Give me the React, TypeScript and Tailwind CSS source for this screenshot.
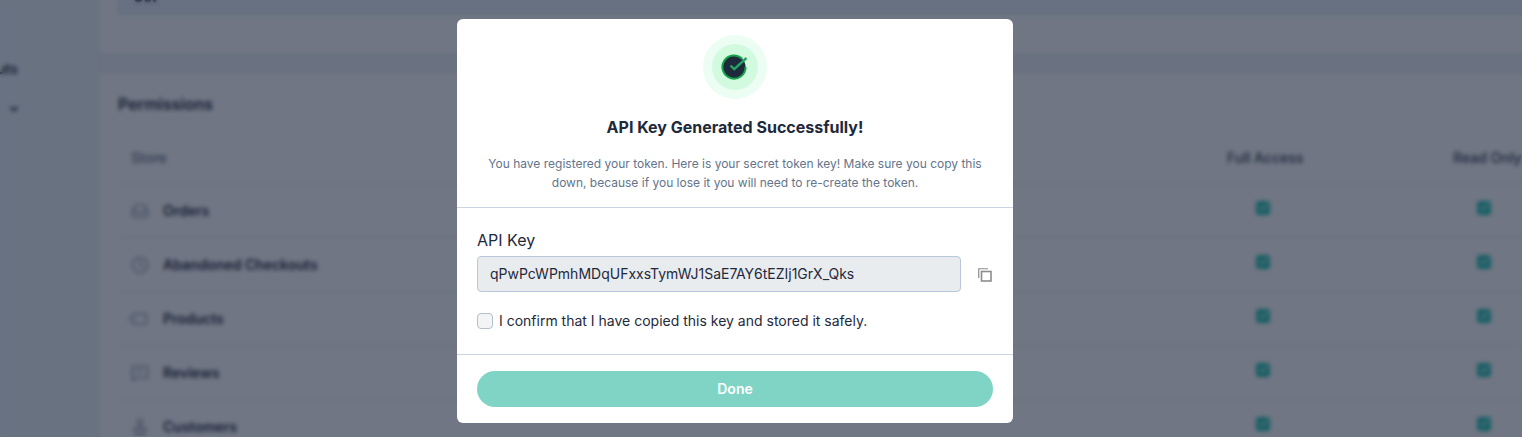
import React from "react";
import { ChevronDown, Inbox, Clock, Tag, Star, MessageSquare, Stamp, Check } from "lucide-react";

const rows = [
  { name: "Orders", Icon: Inbox, extra: "" },
  { name: "Abandoned Checkouts", Icon: Clock, extra: "" },
  { name: "Products", Icon: Tag, extra: "-rotate-45" },
  { name: "Reviews", Icon: MessageSquare, extra: "" },
  { name: "Customers", Icon: Stamp, extra: "" },
];

function Box() {
  return (
    <span className="flex h-[14px] w-[14px] items-center justify-center rounded-[3px] bg-[#1fc4b2]">
      <Check size={11} strokeWidth={3} className="text-white" />
    </span>
  );
}

function Background() {
  return (
    <div className="flex h-[437px] w-[1522px] overflow-hidden bg-[#f0f5f9]">
      <aside className="flex h-full w-[99px] shrink-0 flex-col items-end border-r border-[#dde6ee] bg-[#eef6fb] pr-[80px] pt-[60px] text-sm font-semibold text-[#1e293b]">
        <span className="whitespace-nowrap leading-[18px]">Checkouts</span>
        <ChevronDown size={12} strokeWidth={4} className="mr-[-2px] mt-[25px] text-[#1e293b]" />
      </aside>
      <main className="flex w-[1500px] shrink-0 flex-col gap-[17px]">
        <section className="h-[55px] shrink-0 border-b border-[#dde6ee] bg-white px-[19px]">
          <div className="mt-[-21px] flex h-[36px] items-center rounded border border-[#dde6ee] bg-[#e8f2fb] px-[14px] text-sm font-semibold text-[#1e293b]">
            Get
          </div>
        </section>
        <section className="flex-1 border-t border-[#dde6ee] bg-white px-[19px] pt-[20px]">
          <h2 className="text-base font-semibold leading-[22px] text-[#1e293b]">Permissions</h2>
          <div className="mt-[22px] flex h-[47px] items-start border-b border-[#e6eef5] pl-[13px] pt-[12px] text-sm font-medium leading-[18px] text-[#64748b]">
            <span className="w-[1096px]">Store</span>
            <span className="w-[226px] text-[#334155]">Full Access</span>
            <span className="whitespace-nowrap text-[#334155]">Read Only</span>
          </div>
          {rows.map(({ name, Icon, extra }) => (
            <div key={name} className="flex h-[54px] shrink-0 items-center border-b border-[#e6eef5] pl-[13px] text-sm font-semibold text-[#1e293b]">
              <span className="relative flex w-[32px] shrink-0">
                <Icon size={18} strokeWidth={1.5} className={"text-[#64748b] " + extra} />
                {name === "Reviews" && <Star size={7} strokeWidth={2} className="absolute left-[5px] top-[4px] text-[#64748b]" />}
              </span>
              <span className="w-[1093px] shrink-0">{name}</span>
              <span className="w-[221px] shrink-0 -translate-y-[3px]"><Box /></span>
              <span className="-translate-y-[3px]"><Box /></span>
            </div>
          ))}
        </section>
      </main>
    </div>
  );
}

function SuccessIcon() {
  return (
    <div className="mx-auto flex h-16 w-16 items-center justify-center rounded-full bg-[#ecfdf3]">
      <div className="flex h-[46px] w-[46px] items-center justify-center rounded-full bg-[#d1fadf]">
        <svg width="28" height="28" viewBox="0 0 28 28" fill="none">
          <circle cx="13" cy="14" r="11.5" fill="#1e293b" />
          <path d="M21.2 5.8A11.6 11.6 0 1 0 24.6 14" stroke="#16a34a" strokeWidth="2" />
          <path d="M9.5 12.5l3.7 3.7L25.5 5" stroke="#22a565" strokeWidth="2.4" />
        </svg>
      </div>
    </div>
  );
}

function CopyGlyph() {
  return (
    <svg width="14" height="14" viewBox="0 0 14 14" fill="none" className="ml-[17px] mt-[2px]" stroke="#8c8c8c">
      <path d="M.75 10V.75H10" strokeWidth="1.2" />
      <rect x="3.5" y="3.5" width="9.5" height="9.5" strokeWidth="1.6" />
    </svg>
  );
}

export default function App() {
  return (
    <div className="relative h-[437px] w-[1522px] overflow-hidden font-['Inter',sans-serif]">
      <Background />
      <div className="absolute inset-0 bg-[rgba(17,26,48,0.6)] pl-[457px] pt-[19px] backdrop-blur-[2px]">
        <div className="w-[556px] rounded-md bg-white">
          <div className="flex h-[189px] flex-col items-center border-b border-[#cbd5e1] px-5 pt-4">
            <SuccessIcon />
            <h1 className="mt-[16px] text-base font-bold leading-6 text-[#1e293b]">API Key Generated Successfully!</h1>
            <p className="mt-[15px] w-[516px] text-center text-xs leading-[19px] text-[#64748b]">
              You have registered your token. Here is your secret token key! Make sure you copy this down, because if you lose it you will need to re-create the token.
            </p>
          </div>
          <div className="flex h-[147px] flex-col border-b border-[#cbd5e1] px-5 pt-[20px]">
            <label className="text-base leading-6 text-[#1e293b]">API Key</label>
            <div className="mt-1 flex items-center">
              <div className="flex h-9 w-[484px] items-center rounded border border-[#b8c7d9] bg-[#e9ecef] px-[12px] text-sm text-[#1e293b]">
                qPwPcWPmhMDqUFxxsTymWJ1SaE7AY6tEZIj1GrX_Qks
              </div>
              <CopyGlyph />
            </div>
            <div className="mt-[19px] flex items-center gap-[6px]">
              <span className="h-4 w-4 rounded border-[1.5px] border-[#b4bfcc] bg-[#f3f4f6]" />
              <span className="text-sm leading-[20px] text-[#1e293b]">I confirm that I have copied this key and stored it safely.</span>
            </div>
          </div>
          <div className="h-[68px] px-5 pt-4">
            <button className="h-9 w-full rounded-full bg-[#80d4c6] text-sm font-semibold text-white">Done</button>
          </div>
        </div>
      </div>
    </div>
  );
}
